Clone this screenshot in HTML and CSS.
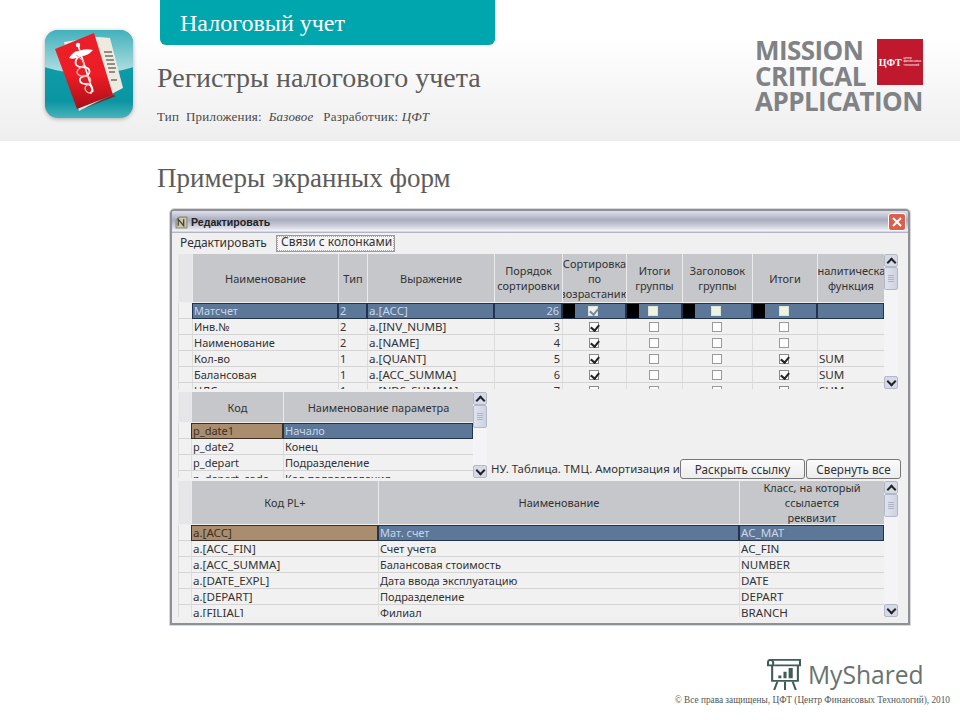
FILE: index.html
```html
<!DOCTYPE html>
<html lang="ru">
<head>
<meta charset="utf-8">
<title>Регистры налогового учета</title>
<link rel="stylesheet" href="styles.css">
</head>
<body>
<header class="head">
  <svg class="app-icon" viewBox="0 0 90 90" width="90" height="90" aria-hidden="true">
    <defs>
      <linearGradient id="tealTop" x1="0" y1="0" x2="0" y2="1"><stop offset="0" stop-color="#3fb0ba"/><stop offset="1" stop-color="#b5e0e3"/></linearGradient>
      <linearGradient id="tealBot" x1="0" y1="0" x2="0" y2="1"><stop offset="0" stop-color="#12a3ae"/><stop offset=".8" stop-color="#0a95a2"/><stop offset="1" stop-color="#4db4bc"/></linearGradient>
      <linearGradient id="red" x1="0" y1="0" x2="0" y2="1"><stop offset="0" stop-color="#e8202a"/><stop offset=".55" stop-color="#ee1c25"/><stop offset="1" stop-color="#a80f18"/></linearGradient>
      <clipPath id="rr"><rect x="1" y="1" width="88" height="88" rx="13"/></clipPath>
    </defs>
    <g clip-path="url(#rr)">
      <rect x="0" y="0" width="90" height="90" fill="url(#tealBot)"/>
      <path d="M0 0H90V38Q45 52 0 38Z" fill="url(#tealTop)"/>
    </g>
    <path d="M20 13L54 8L66 9L79 59L35 82Z" fill="#efeadf"/>
    <path d="M35 82L69 66L72 67L39 80Z" fill="#8c2024"/>
    <path d="M11 20L50 4L69 66L33 80Z" fill="url(#red)"/>
    <path d="M60 23h8M61 27h8M62 31h8M63 35h8M64 39h8M65 43h6M67 51h6" stroke="#333" stroke-width="1.2"/>
    <path d="M34 16L49 63" stroke="#fff" stroke-width="1.6"/>
    <circle cx="34" cy="16" r="2.2" fill="#fff"/>
    <path d="M25 29Q30 21 35 22Q41 19 49 21Q44 27 37 27Q31 31 25 29Z" fill="#fff"/>
    <path d="M40 25C28 30 30 38 38 38C48 38 47 46 41 47C33 48 35 55 42 55C49 55 50 62 46 64" fill="none" stroke="#fff" stroke-width="1.8"/>
    <path d="M32 26C40 31 43 36 36 39C30 43 34 48 41 47C47 47 49 53 43 56C39 59 42 65 48 64" fill="none" stroke="#f5b5b5" stroke-width="1.4"/>
  </svg>
  <div class="head-text">
    <div class="tab">Налоговый учет</div>
    <h1 class="title">Регистры налогового учета</h1>
    <p class="meta">Тип&nbsp; Приложения:&nbsp; <i class="base">Базовое</i> &nbsp;Разработчик: <i>ЦФТ</i></p>
  </div>
  <div class="brand">
    <div class="brand-words"><div class="bw">MISSION</div><div class="bw">CRITICAL</div><div class="bw">APPLICATION</div></div>
    <div class="brand-box"><b>ЦФТ</b><small>центр<br>финансовых<br>технологий</small></div>
  </div>
</header>

<main class="content">
  <h2 class="sub">Примеры экранных форм</h2>

  <section class="win">
    <div class="win-title">
      <svg class="win-ico" viewBox="0 0 12 12" width="13" height="13" aria-hidden="true"><path d="M1 11V4L4 1H11V11Z" fill="#c9c7a6" stroke="#8a8a70"/><path d="M3 9V3L8 9V3" fill="none" stroke="#444" stroke-width="1.2"/></svg>
      <span class="win-name">Редактировать</span>
      <span class="win-close"><svg viewBox="0 0 12 12" width="12" height="12" aria-hidden="true"><path d="M2 2L10 10M10 2L2 10" stroke="#fff" stroke-width="2"/></svg></span>
    </div>
    <div class="tabs">
      <span class="tab-plain">Редактировать</span>
      <span class="tab-on">Связи с колонками</span>
    </div>

    <div class="pane pane-one">
      <div class="grid g1">
        <div class="hc"></div><div class="hc"><span>Наименование</span></div><div class="hc"><span>Тип</span></div><div class="hc"><span>Выражение</span></div><div class="hc"><span>Порядок<br>сортировки</span></div><div class="hc"><span>Сортировка<br>по<br>возрастанию</span></div><div class="hc"><span>Итоги<br>группы</span></div><div class="hc"><span>Заголовок<br>группы</span></div><div class="hc"><span>Итоги</span></div><div class="hc"><span>Аналитическая<br>функция</span></div>

        <div class="c"></div><div class="c sel">Матсчет</div><div class="c sel">2</div><div class="c sel l">a.[ACC]</div><div class="c sel r">26</div><div class="c sel blk"><i class="cb on"></i></div><div class="c sel blk"><i class="cb fill"></i></div><div class="c sel blk"><i class="cb fill"></i></div><div class="c sel blk"><i class="cb fill"></i></div><div class="c sel"></div>

        <div class="c"></div><div class="c">Инв.№</div><div class="c">2</div><div class="c l">a.[INV_NUMB]</div><div class="c r">3</div><div class="c m"><i class="cb on"></i></div><div class="c m"><i class="cb"></i></div><div class="c m"><i class="cb"></i></div><div class="c m"><i class="cb"></i></div><div class="c"></div>

        <div class="c"></div><div class="c">Наименование</div><div class="c">2</div><div class="c l">a.[NAME]</div><div class="c r">4</div><div class="c m"><i class="cb on"></i></div><div class="c m"><i class="cb"></i></div><div class="c m"><i class="cb"></i></div><div class="c m"><i class="cb"></i></div><div class="c"></div>

        <div class="c"></div><div class="c">Кол-во</div><div class="c">1</div><div class="c l">a.[QUANT]</div><div class="c r">5</div><div class="c m"><i class="cb on"></i></div><div class="c m"><i class="cb"></i></div><div class="c m"><i class="cb"></i></div><div class="c m"><i class="cb on"></i></div><div class="c l">SUM</div>

        <div class="c"></div><div class="c">Балансовая</div><div class="c">1</div><div class="c l">a.[ACC_SUMMA]</div><div class="c r">6</div><div class="c m"><i class="cb on"></i></div><div class="c m"><i class="cb"></i></div><div class="c m"><i class="cb"></i></div><div class="c m"><i class="cb on"></i></div><div class="c l">SUM</div>

        <div class="c"></div><div class="c">НДС-сс</div><div class="c">1</div><div class="c l">a.[NDS_SUMMA]</div><div class="c r">7</div><div class="c m"><i class="cb on"></i></div><div class="c m"><i class="cb"></i></div><div class="c m"><i class="cb"></i></div><div class="c m"><i class="cb on"></i></div><div class="c l">SUM</div>
      </div>
      <div class="sb"><b class="up"></b><b class="thumb"></b><b class="fill-s"></b><b class="down"></b></div>
    </div>

    <div class="mid">
      <div class="pane pane-two">
        <div class="grid g2">
          <div class="hc"></div><div class="hc"><span>Код</span></div><div class="hc"><span>Наименование параметра</span></div>
          <div class="c"></div><div class="c tan">p_date1</div><div class="c sel">Начало</div>
          <div class="c"></div><div class="c">p_date2</div><div class="c">Конец</div>
          <div class="c"></div><div class="c">p_depart</div><div class="c">Подразделение</div>
          <div class="c"></div><div class="c">p_depart_code</div><div class="c">Код подразделения</div>
        </div>
        <div class="sb"><b class="up"></b><b class="thumb"></b><b class="fill-s"></b><b class="down"></b></div>
      </div>
      <div class="actions">
        <span class="path">НУ. Таблица. ТМЦ. Амортизация и</span>
        <button class="btn b-open">Раскрыть ссылку</button>
        <button class="btn b-close">Свернуть все</button>
      </div>
    </div>

    <div class="pane pane-three">
      <div class="grid g3">
        <div class="hc"></div><div class="hc"><span>Код PL+</span></div><div class="hc"><span>Наименование</span></div><div class="hc"><span>Класс, на который<br>ссылается<br>реквизит</span></div>
        <div class="c"></div><div class="c tan l">a.[ACC]</div><div class="c sel">Мат. счет</div><div class="c sel l">AC_MAT</div>
        <div class="c"></div><div class="c l">a.[ACC_FIN]</div><div class="c">Счет учета</div><div class="c l">AC_FIN</div>
        <div class="c"></div><div class="c l">a.[ACC_SUMMA]</div><div class="c">Балансовая стоимость</div><div class="c l">NUMBER</div>
        <div class="c"></div><div class="c l">a.[DATE_EXPL]</div><div class="c">Дата ввода эксплуатацию</div><div class="c l">DATE</div>
        <div class="c"></div><div class="c l">a.[DEPART]</div><div class="c">Подразделение</div><div class="c l">DEPART</div>
        <div class="c"></div><div class="c l">a.[FILIAL]</div><div class="c">Филиал</div><div class="c l">BRANCH</div>
      </div>
      <div class="sb"><b class="up"></b><b class="thumb"></b><b class="fill-s"></b><b class="down"></b></div>
    </div>
  </section>
</main>

<footer class="foot">
  <div class="myshared">
    <svg viewBox="0 0 34 36" width="35" height="33" preserveAspectRatio="none" aria-hidden="true">
      <g fill="none" stroke="#3f5c55" stroke-width="2">
        <path d="M6 9V5Q6 2 3 2Q1 2 1 5V8H5"/>
        <path d="M3 2H32V8H7"/>
        <path d="M5 8V25H30V8"/>
        <path d="M10 26L7 35M17.500 26V35M25 26L28 35"/>
      </g>
      <path d="M11 19h3v3h-3zM16 15h3v7h-3zM21 11h4v11h-4z" fill="#3f5c55"/>
    </svg>
    <span>MyShared</span>
  </div>
  <p class="copy">© Все права защищены, ЦФТ (Центр Финансовых Технологий), 2010</p>
</footer>
</body>
</html>
```

FILE: styles.css
```css
* { box-sizing: border-box; }
html, body { margin: 0; padding: 0; }
body { width: 960px; height: 720px; background: #fff; overflow: hidden; font-family: "Liberation Serif", serif; color: #555; }

/* page header */
.head { display: flex; height: 141px; background: linear-gradient(#fff 0, #fff 25%, #eeeeee 100%); }
.app-icon { margin: 29px 0 0 44px; flex: none; filter: drop-shadow(0 1px 2px rgba(0,0,0,.3)); }
.head-text { margin-left: 23px; width: 400px; flex: none; }
.tab { margin-left: 3px; width: 335px; height: 45px; padding: 9px 0 0 20px; background: #00a6ad; border-radius: 0 0 6px 6px; color: #fff; font-size: 24px; line-height: 28px; }
.title { margin: 16px 0 0; font-size: 28px; line-height: 34px; font-weight: normal; color: #5c5c5c; white-space: nowrap; }
.meta { margin: 15px 0 0; font-size: 13px; line-height: 14px; letter-spacing: .2px; color: #4a4a4a; white-space: nowrap; }
.base { margin-right: 3px; }
.brand { position: relative; margin: 38px 0 0 198px; width: 170px; height: 76px; }
.brand-words { font-family: "Open Sans", sans-serif; font-weight: 700; font-size: 26px; letter-spacing: -.55px; color: #808285; white-space: nowrap; }
.bw { width: max-content; height: 25.500px; line-height: 25.500px; }
.brand-box { position: absolute; left: 122px; top: 1px; width: 46px; height: 46px; background: #c0182c; color: #fff; display: flex; align-items: center; justify-content: center; gap: 2px; }
.brand-box b { font-family: "Liberation Serif", serif; font-size: 10px; }
.brand-box small { font-family: "Liberation Sans", sans-serif; font-size: 3px; line-height: 3.500px; }

/* content */
.content { padding-left: 170px; }
.sub { margin: 21px 0 0 -13px; font-size: 27px; line-height: 32px; font-weight: normal; color: #5c5c5c; }
.win { width: 740px; height: 416px; margin-top: 15px; background: #f0f0f0; border: 2px solid #8d9099; border-radius: 4px 4px 0 0; outline: 1px solid #d8d8d8; font-family: "Noto Sans", sans-serif; font-size: 11px; color: #333; overflow: hidden; }
.win-title { display: flex; align-items: center; height: 22px; padding: 0 2px 0 3px; background: linear-gradient(#dfe1e8 0, #a9adc0 40%, #c8cad6 65%, #f2f2f6 90%, #9ea3b6 100%); }
.win-ico { flex: none; }
.win-name { margin-left: 3px; font-family: "Liberation Sans", sans-serif; font-weight: 700; font-size: 10.600px; color: #222; }
.win-close { margin-left: auto; width: 18px; height: 18px; border: 1px solid #fff; border-radius: 3px; background: #d9604e; display: flex; align-items: center; justify-content: center; }
.tabs { display: flex; align-items: flex-start; height: 21px; padding: 2px 0 0 8px; font-size: 12px; }
.tab-plain { width: 96px; line-height: 16px; }
.tab-on { width: 119px; height: 17px; padding-left: 4px; border: 1px solid #999; outline: 1px dotted #aaa; outline-offset: -2px; line-height: 12px; background: #f4f4f4; white-space: nowrap; }

.pane { display: flex; overflow: hidden; margin-left: 6px; }
.pane-one { width: 720px; height: 135px; }
.mid { display: flex; margin-top: 3px; height: 86px; }
.pane-two { width: 310px; height: 86px; flex: none; }
.actions { display: flex; flex: 1; align-items: flex-end; margin-left: 2px; }
.path { width: 190px; flex: none; overflow: hidden; white-space: nowrap; font-size: 11.400px; line-height: 18px; padding-left: 1px; }
.btn { height: 20px; margin-bottom: -1px; padding: 0; border: 1px solid #777; border-radius: 3px; background: linear-gradient(#fbfbfb, #ececec); font: inherit; font-size: 11.700px; color: #333; flex: none; }
.b-open { width: 125px; }
.b-close { width: 95px; margin-left: 1px; }
.pane-three { width: 720px; height: 136px; margin-top: 3px; }

/* data grids */
.grid { display: grid; flex: none; align-content: start; }
.g1 { width: 706px; grid-template-columns: 14px 146px 29px 127px 68px 64px 56px 70px 65px 67px; grid-template-rows: 49px repeat(6, 16px); }
.g2 { width: 295px; grid-template-columns: 13px 92px 190px; grid-template-rows: 31px repeat(4, 16px); }
.g3 { width: 706px; grid-template-columns: 13px 187px 361px 145px; grid-template-rows: 44px repeat(6, 16px); }
.hc { display: flex; align-items: center; justify-content: center; overflow: hidden; background: #c5c7cb; border-left: 1px solid #e9e9e9; border-bottom: 1px solid #eee; text-align: center; white-space: nowrap; line-height: 15px; }
.hc:first-child { background: #e6e6e8; }
.c { padding: 0 2px 0 1px; overflow: hidden; white-space: nowrap; line-height: 15px; border-bottom: 1px solid #d4d4d4; border-left: 1px solid #dcdcdc; background: #f1f1f1; }
.l { font-size: 11.600px; }
.r { text-align: right; }
.m { display: flex; align-items: center; justify-content: center; padding: 0 3px 0 1px; }
.sel { background: #5c7797; border: 1px solid #22344c; color: #c9d6e8; line-height: 14px; }
.tan { background: #a98d6e; border: 1px solid #3a3024; line-height: 14px; color: #3a3025; }
.blk { display: flex; align-items: center; justify-content: center; padding: 0 3px 0 1px; background: linear-gradient(#000, #000) left / 12px 100% no-repeat, #5c7797; }
.cb { position: relative; display: block; width: 10px; height: 10px; border: 1px solid #9a9a9a; background: #fdfdfd; }
.cb.on { border-color: #8a8a8a; }
.cb.on::after { content: ""; position: absolute; left: 2px; top: 0; width: 4px; height: 6px; border: solid #222; border-width: 0 2px 2px 0; transform: rotate(40deg); }
.sel .cb { border-color: #d8e2d8; background: #eef3e8; }
.sel .cb.on::after { border-color: #7b8a99; }
.sel .fill { background: #eef3e0; }

/* scrollbars */
.sb { display: flex; flex-direction: column; width: 14px; flex: none; height: 100%; background: #f4f4f6; }
.sb b { display: block; flex: none; }
.up, .down { position: relative; height: 13px; background: #d6dae6; border: 1px solid #b4b8c6; border-radius: 2px; }
.up::after, .down::after { content: ""; position: absolute; left: 3px; width: 5px; height: 5px; border: solid #222; border-width: 2px 0 0 2px; transform: rotate(45deg); top: 4px; }
.down::after { transform: rotate(225deg); top: 1px; }
.thumb { height: 23px; background: repeating-linear-gradient(#aeb4c4 0 1px, transparent 1px 2px) center / 6px 7px no-repeat, linear-gradient(90deg, #e0e4f0, #cdd2e0); border: 1px solid #b4b8c6; border-radius: 2px; }
.sb .fill-s { flex: 1; }

/* footer */
.foot { position: relative; height: 95px; }
.myshared { position: absolute; left: 767px; top: 33px; display: flex; align-items: center; gap: 6px; color: #66736f; font-family: "Open Sans", sans-serif; font-size: 24.600px; line-height: 33px; }
.copy { position: absolute; right: 10px; top: 70px; margin: 0; font-size: 9.300px; line-height: 11px; color: #555; white-space: nowrap; }
```
